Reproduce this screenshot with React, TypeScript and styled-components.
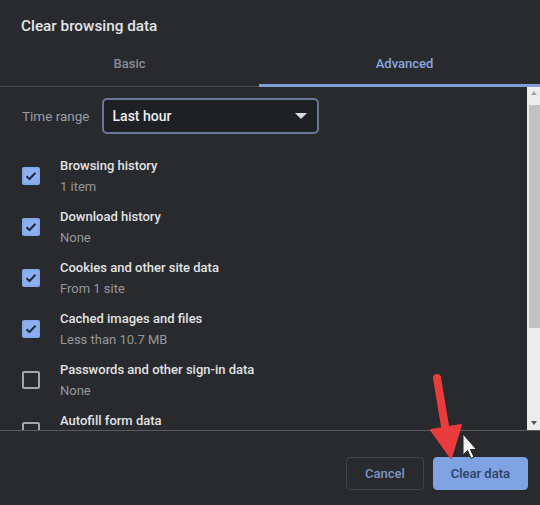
import React from 'react';
import styled, { createGlobalStyle } from 'styled-components';

const GlobalStyle = createGlobalStyle`
  html, body {
    margin: 0;
    padding: 0;
    background: #292a2d;
  }
  body {
    font-family: Roboto, 'Liberation Sans', Arial, sans-serif;
  }
`;

const Dialog = styled.div`
  position: relative;
  width: 540px;
  height: 505px;
  background: #292a2d;
  display: flex;
  flex-direction: column;
  overflow: hidden;
`;

const Title = styled.h1`
  margin: 0;
  height: 46px;
  box-sizing: border-box;
  padding: 17px 0 0 21px;
  font-size: 15.3px;
  font-weight: 500;
  color: #e3e4e6;
`;

const Tabs = styled.div`
  display: flex;
  height: 41px;
  box-sizing: border-box;
  border-bottom: 1px solid #46484c;
`;

const Tab = styled.div<{ $active?: boolean; $width?: number }>`
  flex: ${(p) => (p.$width ? `0 0 ${p.$width}px` : '1')};
  display: flex;
  align-items: center;
  justify-content: center;
  padding-left: ${(p) => (p.$active ? '10px' : '0')};
  padding-bottom: 4px;
  margin-bottom: -1px;
  font-size: 13px;
  font-weight: 500;
  color: ${(p) => (p.$active ? '#88a8e0' : '#8a8d92')};
  border-bottom: 3px solid ${(p) => (p.$active ? '#7f9fd6' : 'transparent')};
`;

const Body = styled.div`
  display: flex;
  height: 343px;
  overflow: hidden;
  border-bottom: 1px solid #5a5c60;
`;

const Content = styled.div`
  flex: 1;
  padding: 11px 0 0 22px;
`;

const RangeRow = styled.div`
  display: flex;
  align-items: center;
  gap: 12px;
  height: 36px;
  margin-bottom: 16px;
`;

const Label = styled.span`
  font-size: 13.5px;
  color: #9a9da2;
`;

const Select = styled.div`
  width: 217px;
  height: 36px;
  box-sizing: border-box;
  border: 2px solid #6a7894;
  border-radius: 5px;
  background: #1f2023;
  display: flex;
  align-items: center;
  justify-content: space-between;
  padding: 0 10px 0 9px;
  font-size: 14px;
  font-weight: 500;
  color: #eceef0;
`;

const Caret = styled.span`
  width: 0;
  height: 0;
  border-left: 6px solid transparent;
  border-right: 6px solid transparent;
  border-top: 6px solid #d8d9db;
`;

const Row = styled.div`
  display: flex;
  align-items: center;
  height: 51px;
`;

const Box = styled.span<{ $checked?: boolean }>`
  flex: 0 0 18px;
  height: 18px;
  box-sizing: border-box;
  border-radius: 2px;
  border: 2px solid ${(p) => (p.$checked ? '#84a8ea' : '#a2a5aa')};
  background: ${(p) => (p.$checked ? '#8cb0f0' : 'transparent')};
  display: flex;
  align-items: center;
  justify-content: center;
  margin-right: 20px;
`;

const Texts = styled.div`
  display: flex;
  flex-direction: column;
`;

const ItemTitle = styled.span`
  font-size: 13px;
  font-weight: 500;
  line-height: 21px;
  color: #e1e2e4;
`;

const ItemSub = styled.span`
  font-size: 13px;
  line-height: 21px;
  color: #94979c;
`;

const Scrollbar = styled.div`
  flex: 0 0 13px;
  background: #ececec;
  display: flex;
  flex-direction: column;
  align-items: center;
  padding-top: 4px;
  box-sizing: border-box;
`;

const Arrow = styled.span<{ $down?: boolean }>`
  width: 0;
  height: 0;
  border-left: 3px solid transparent;
  border-right: 3px solid transparent;
  ${(p) =>
    p.$down
      ? 'border-top: 4px solid #555; margin-top: auto; margin-bottom: 5px;'
      : 'border-bottom: 4px solid #a3a3a3;'}
`;

const Thumb = styled.div`
  align-self: stretch;
  margin: 10px 0 0 2px;
  height: 223px;
  background: #c1c1c1;
`;

const Footer = styled.div`
  flex: 1;
  display: flex;
  justify-content: flex-end;
  align-items: flex-start;
  gap: 9px;
  padding: 26px 12px 0 0;
`;

const Button = styled.button<{ $primary?: boolean }>`
  height: 33px;
  padding: 0 ${(p) => (p.$primary ? '17px' : '18px')};
  border-radius: 4px;
  font-family: inherit;
  font-size: 13px;
  font-weight: 500;
  border: 1px solid ${(p) => (p.$primary ? '#7ea2e2' : '#414347')};
  background: ${(p) => (p.$primary ? '#7ea2e2' : 'transparent')};
  color: ${(p) => (p.$primary ? '#2c4166' : '#7d95c2')};
`;

const Overlay = styled.svg`
  position: absolute;
  left: 0;
  top: 0;
  pointer-events: none;
`;

const Check = () => (
  <svg width='12' height='10' viewBox='0 0 12 10'>
    <path d='M1.5 5.2 L4.5 8 L10.5 1.8' fill='none' stroke='#1e2a44' strokeWidth='2' />
  </svg>
);

const items = [
  { title: 'Browsing history', sub: '1 item', checked: true },
  { title: 'Download history', sub: 'None', checked: true },
  { title: 'Cookies and other site data', sub: 'From 1 site', checked: true },
  { title: 'Cached images and files', sub: 'Less than 10.7 MB', checked: true },
  { title: 'Passwords and other sign-in data', sub: 'None', checked: false },
  { title: 'Autofill form data', sub: '', checked: false },
];

const App = () => (
  <>
    <GlobalStyle />
    <Dialog>
      <Title>Clear browsing data</Title>
      <Tabs>
        <Tab $width={259}>Basic</Tab>
        <Tab $active>Advanced</Tab>
      </Tabs>
      <Body>
        <Content>
          <RangeRow>
            <Label>Time range</Label>
            <Select>
              Last hour
              <Caret />
            </Select>
          </RangeRow>
          {items.map((it) => (
            <Row key={it.title}>
              <Box $checked={it.checked}>{it.checked && <Check />}</Box>
              <Texts>
                <ItemTitle>{it.title}</ItemTitle>
                <ItemSub>{it.sub || '\u00a0'}</ItemSub>
              </Texts>
            </Row>
          ))}
        </Content>
        <Scrollbar>
          <Arrow />
          <Thumb />
          <Arrow $down />
        </Scrollbar>
      </Body>
      <Footer>
        <Button>Cancel</Button>
        <Button $primary>Clear data</Button>
      </Footer>
      <Overlay width='540' height='505' viewBox='0 0 540 505'>
        <line x1='437' y1='378' x2='446' y2='432' stroke='#ea3b3d' strokeWidth='8' strokeLinecap='round' />
        <path d='M431 430 L461 425 L451 458 Z' fill='#ea3b3d' stroke='#ea3b3d' strokeWidth='2' strokeLinejoin='round' />
        <path
          d='M463 434 L463 455 L467.5 450.5 L471 458.5 L474 457 L470.5 449.5 L476.5 449.5 Z'
          fill='#f4f4f4'
          stroke='#222'
          strokeWidth='1'
          strokeLinejoin='round'
        />
      </Overlay>
    </Dialog>
  </>
);

export default App;
